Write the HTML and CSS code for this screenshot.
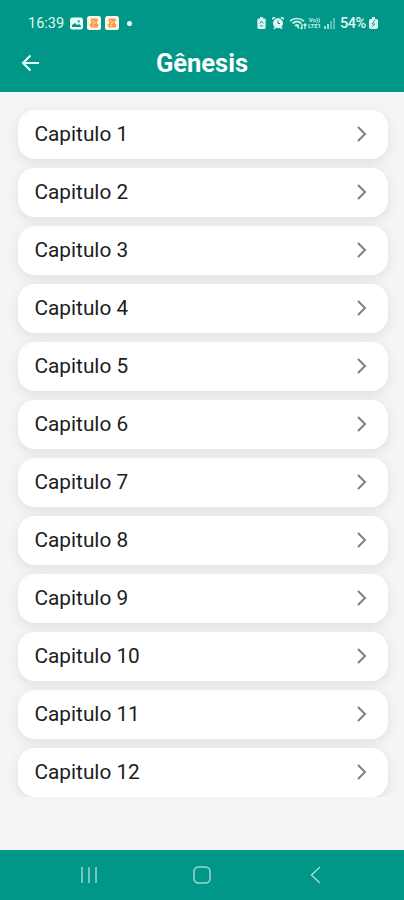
FILE: index.html
```
<!DOCTYPE html>
<html lang="pt">
<head>
<meta charset="utf-8">
<title>Gênesis</title>
<link rel="stylesheet" href="styles.css">
</head>
<body>
<svg class="defs" width="0" height="0" aria-hidden="true">
  <symbol id="chevron" viewBox="0 0 12 18"><path d="M2 2l7 7-7 7" fill="none" stroke="#808080" stroke-width="2"/></symbol>
  <symbol id="app" viewBox="0 0 14 14"><rect width="14" height="14" rx="2.5" fill="#fff4e8"/><path d="M4 2.500h6l1 2-1.500 2L11.500 9l-1 2.500H4L2.500 9l2-2.500-1-2z" fill="#f79a4b"/><path d="M5 5.500l1.500-1M6 8l3-2M5.500 10l1.500-.5" stroke="#fff0df"/></symbol>
</svg>
<header class="top">
  <div class="status">
    <div class="status-left">
      <span class="clock">16:39</span>
      <svg width="13" height="13" viewBox="0 0 13 13"><rect y=".5" width="13" height="12" rx="2.5" fill="#e9fffb"/><path d="M2 10V8l3-2 2 2 2-1 2 2v1z" fill="#009788"/><circle cx="8.8" cy="4.3" r="1.1" fill="#009788"/></svg>
      <svg width="14" height="14"><use href="#app"/></svg>
      <svg width="14" height="14"><use href="#app"/></svg>
      <i class="dot"></i>
    </div>
    <div class="status-right">
      <svg width="9" height="12" viewBox="0 0 9 13"><path d="M3 0h3v1.500h1.500Q9 1.500 9 3v8.500Q9 13 7.500 13h-6Q0 13 0 11.500V3q0-1.500 1.500-1.500H3z" fill="#d8f5f0"/><path d="M2.500 7l2-2.500 2 2.500M3 9.500h3" fill="none" stroke="#009788"/></svg>
      <svg class="alarm" width="12" height="12" viewBox="0 0 12 12"><path d="M0 2l3-2M12 2L9 0M2 12l1.500-2M10 12l-1.500-2" stroke="#e0f8f4" stroke-width="1.600"/><circle cx="6" cy="6.200" r="5" fill="#e0f8f4"/><path d="M6 3.500v3h2" fill="none" stroke="#009788"/></svg>
      <svg class="wifi" width="17" height="13" viewBox="0 0 17 13"><path d="M0 4q7-5 14 0M2.500 6.500q4.500-4 9 0M5 9q2-2 4 0" fill="none" stroke="#c7eee8" stroke-width="1.700"/><path d="M7 9L9 11.500M12 7v5M10.500 10.500L12 12M15 12V7M13.600 8.500L15 7l1.400 1.500" fill="none" stroke="#d8f5f0" stroke-width="1.300"/></svg>
      <span class="volte"><span>Vo))</span><span>LTE1</span></span>
      <svg class="signal" width="12" height="12" viewBox="0 0 12 12"><path d="M1 12V9M4 12V7" stroke="#c7eee8" stroke-width="1.600"/><path d="M7 12V4M10 12V1" stroke="#79c7be" stroke-width="1.600"/></svg>
      <span class="percent">54%</span>
      <svg width="9" height="12" viewBox="0 0 9 12"><path d="M3 0h3v2h1.500Q9 2 9 4v6q0 2-2 2H2q-2 0-2-2V4q0-2 1.500-2H3z" fill="#d8f5f0"/><path d="M6 3L3 7h3l-3 3" fill="none" stroke="#269f93"/></svg>
    </div>
  </div>
  <div class="bar">
    <svg class="back" width="18" height="18" viewBox="0 0 18 18"><path d="M18 9H2M9.500 1.500L2 9l7.500 7.500" fill="none" stroke="#e9fffb" stroke-width="2.100"/></svg>
    <h1>Gênesis</h1>
  </div>
</header>
<main class="list">
  <a class="card"><span>Capitulo 1</span><svg width="12" height="18"><use href="#chevron"/></svg></a>
  <a class="card"><span>Capitulo 2</span><svg width="12" height="18"><use href="#chevron"/></svg></a>
  <a class="card"><span>Capitulo 3</span><svg width="12" height="18"><use href="#chevron"/></svg></a>
  <a class="card"><span>Capitulo 4</span><svg width="12" height="18"><use href="#chevron"/></svg></a>
  <a class="card"><span>Capitulo 5</span><svg width="12" height="18"><use href="#chevron"/></svg></a>
  <a class="card"><span>Capitulo 6</span><svg width="12" height="18"><use href="#chevron"/></svg></a>
  <a class="card"><span>Capitulo 7</span><svg width="12" height="18"><use href="#chevron"/></svg></a>
  <a class="card"><span>Capitulo 8</span><svg width="12" height="18"><use href="#chevron"/></svg></a>
  <a class="card"><span>Capitulo 9</span><svg width="12" height="18"><use href="#chevron"/></svg></a>
  <a class="card"><span>Capitulo 10</span><svg width="12" height="18"><use href="#chevron"/></svg></a>
  <a class="card"><span>Capitulo 11</span><svg width="12" height="18"><use href="#chevron"/></svg></a>
  <a class="card"><span>Capitulo 12</span><svg width="12" height="18"><use href="#chevron"/></svg></a>
</main>
<nav class="nav">
  <svg width="18" height="18" viewBox="0 0 18 18"><path d="M2 1v16M9 1v16M16 1v16" stroke="#84cbc3" stroke-width="1.800"/></svg>
  <svg width="18" height="18" viewBox="0 0 18 18"><rect x="1" y="1" width="16" height="16" rx="4.500" fill="none" stroke="#a0d8d1" stroke-width="1.500"/></svg>
  <svg width="18" height="18" viewBox="0 0 18 18"><path d="M14 1L5.500 9l8.500 8" fill="none" stroke="#a0d8d1" stroke-width="1.500"/></svg>
</nav>
</body>
</html>
```
FILE: styles.css
```
* { box-sizing: border-box; }
body {
  margin: 0;
  height: 900px;
  display: flex;
  flex-direction: column;
  overflow: hidden;
  background: #f5f5f5;
  font-family: Roboto, sans-serif;
}
svg { display: block; flex: none; }
.defs { position: absolute; }
.top { height: 92px; background: #009788; color: #fff; }
.status {
  height: 46px;
  padding: 0 26px 0 28px;
  display: flex;
  justify-content: space-between;
  align-items: center;
}
.status-left, .status-right { display: flex; align-items: center; }
.status-left { gap: 4px; }
.clock { width: 38px; font-size: 14.5px; color: #e0f8f4; }
.dot { width: 5px; height: 5px; margin-left: 4px; border-radius: 50%; background: #e9fffb; }
.alarm { margin-left: 6px; }
.wifi { margin-left: 6px; }
.volte {
  width: 15px;
  display: flex;
  flex-direction: column;
  font-size: 6px;
  line-height: 6px;
  font-weight: 700;
  text-align: center;
  color: #c7eee8;
}
.signal { margin: 0 4px 0 2px; }
.percent { width: 29px; font-size: 14.5px; font-weight: 500; letter-spacing: -0.5px; color: #e0f8f4; }
.bar {
  height: 34px;
  display: grid;
  grid-template-columns: 60px 1fr 60px;
  align-items: center;
}
.back { margin-left: 21px; }
h1 { margin: 0; font-size: 25.5px; line-height: 34px; font-weight: 700; text-align: center; }
.list {
  position: relative;
  z-index: 0;
  height: 705px;
  padding: 17.5px 16px 0 17.5px;
  display: flex;
  flex-direction: column;
  gap: 9px;
  overflow: hidden;
}
.card {
  position: relative;
  flex: none;
  height: 49px;
  padding: 0 20px 0 17px;
  display: flex;
  justify-content: space-between;
  align-items: center;
  border-radius: 17px;
  background: #fff;
  font-size: 20.8px;
  color: #1c1c1c;
}
.card::before {
  content: "";
  position: absolute;
  inset: 0;
  z-index: -1;
  border-radius: 17px;
  box-shadow: 0 3px 12px 1px rgba(0, 0, 0, 0.08);
}
.nav {
  height: 50px;
  margin-top: auto;
  padding: 0 80px;
  display: flex;
  justify-content: space-between;
  align-items: center;
  background: #009788;
}
```
